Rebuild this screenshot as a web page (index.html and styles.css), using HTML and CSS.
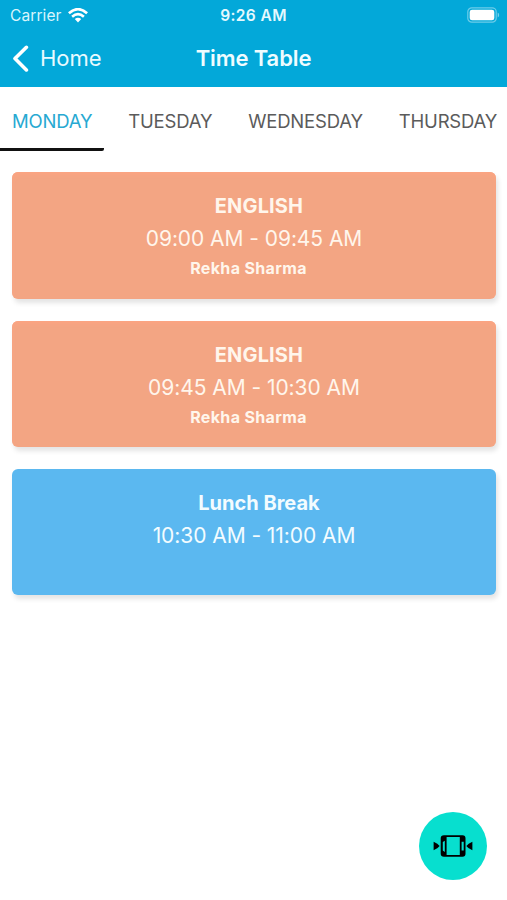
FILE: index.html
```html
<!DOCTYPE html>
<html lang="en">
<head>
<meta charset="utf-8">
<title>Time Table</title>
<link rel="stylesheet" href="styles.css">
</head>
<body>
<header class="header">
  <div class="status">
    <div class="carrier"><span>Carrier</span>
      <svg class="wifi" width="20" height="15" viewBox="0 0 20 15" fill="none" stroke="#fff" stroke-width="2.7"><path d="M.9 5.2Q10-2.8 19.1 5.2"/><path d="M4.1 8.7Q10 3.7 15.9 8.7"/><path d="M6.8 11.1Q10 8.4 13.2 11.1L10 14.5Z" fill="#fff" stroke="none"/></svg>
    </div>
    <span class="clock">9:26 AM</span>
    <svg class="battery" width="33" height="17" viewBox="0 0 33 17"><rect x=".8" y=".8" width="28.4" height="14.4" rx="4" fill="none" stroke="#fff" stroke-opacity=".42" stroke-width="1.2"/><rect x="2.7" y="2.7" width="24.6" height="10.6" rx="2.4" fill="#fff"/><path d="M30.7 5.6q1.5.8 1.5 2.4t-1.5 2.4z" fill="#fff" fill-opacity=".45"/></svg>
  </div>
  <nav class="nav">
    <a class="back"><svg width="17" height="27" viewBox="0 0 17 27" fill="none" stroke="#fff" stroke-width="3.6" stroke-linecap="round" stroke-linejoin="round"><path d="M14.4 2.3L3 13.5L14.4 24.9"/></svg><span>Home</span></a>
    <h1 class="title">Time Table</h1>
    <span></span>
  </nav>
</header>
<div class="tabs">
  <span class="tab active">MONDAY</span>
  <span class="tab">TUESDAY</span>
  <span class="tab">WEDNESDAY</span>
  <span class="tab">THURSDAY</span>
</div>
<main class="list">
  <section class="card">
    <h2 class="subject">ENGLISH</h2>
    <p class="time">09:00 AM - 09:45 AM</p>
    <p class="teacher">Rekha Sharma</p>
  </section>
  <section class="card">
    <h2 class="subject">ENGLISH</h2>
    <p class="time">09:45 AM - 10:30 AM</p>
    <p class="teacher">Rekha Sharma</p>
  </section>
  <section class="card lunch">
    <h2 class="subject">Lunch Break</h2>
    <p class="time">10:30 AM - 11:00 AM</p>
  </section>
</main>
<button class="fab" aria-label="Rotate">
  <svg width="40" height="22" viewBox="0 0 40 22"><path d="M.6 6.8Q5 8.5 6.6 11Q5 13.5 .6 15.2Z"/><path d="M39.4 6.8Q35 8.5 33.4 11Q35 13.5 39.4 15.2Z"/><path fill-rule="evenodd" d="M11 .3H29.5Q32.5 .3 32.5 3.3V18.7Q32.5 21.7 29.5 21.7H11Q7.7 21.7 7.7 18.7V3.3Q7.7 .3 11 .3ZM13.6 2.1V19.9H26.8V2.1ZM9.8 7V15.5L11.8 17V5.7ZM28.6 6.7V15.4H30.7V6.7Z"/></svg>
</button>
</body>
</html>
```

FILE: styles.css
```css
* { box-sizing: border-box; }
body {
  margin: 0;
  height: 900px;
  overflow: hidden;
  background: #fff;
  font-family: Inter, "Liberation Sans", sans-serif;
}
h1, h2, p { margin: 0; }
svg { display: block; flex: none; }
.header {
  height: 87px;
  background: #03a8d9;
  color: #fff;
}
.status, .nav {
  display: grid;
  grid-template-columns: 1fr auto 1fr;
  align-items: center;
}
.status { height: 30px; padding: 0 7px 0 10px; }
.carrier {
  display: flex;
  align-items: center;
  gap: 6px;
  font-size: 15.5px;
  letter-spacing: 0.1px;
  color: #d9f5fc;
}
.clock {
  margin: 0 3px 0 0;
  font-size: 15.5px;
  font-weight: 600;
  letter-spacing: 0.4px;
  color: #e5f9fe;
}
.battery { justify-self: end; }
.nav { height: 56px; padding: 0 12px; }
.back {
  display: flex;
  align-items: center;
  gap: 11px;
  font-size: 22px;
  color: #e9faff;
}
.title {
  font-size: 22px;
  font-weight: 600;
  letter-spacing: -0.1px;
  color: #effcff;
}
.tabs {
  display: flex;
  gap: 12px;
  height: 64px;
  white-space: nowrap;
}
.tab {
  padding: 0 12px;
  line-height: 69px;
  font-size: 18.5px;
  letter-spacing: -0.2px;
  color: #5b5b5b;
}
.active {
  height: 64px;
  border-bottom: 3px solid #111;
  border-radius: 0 0 2px 0;
  color: #27a9d2;
}
.list {
  display: flex;
  flex-direction: column;
  gap: 22px;
  padding: 21.4px 11px 0 12px;
}
.card {
  height: 126.3px;
  padding-top: 20px;
  border-radius: 6px;
  background: #f3a583;
  box-shadow: 2px 4px 5px rgba(0, 0, 0, .11), inset 0 3px 4px #fba482;
  color: #fff6ec;
  text-align: center;
}
.lunch {
  background: #5bb8f0;
  box-shadow: 2px 4px 5px rgba(0, 0, 0, .11);
  color: #f3fcff;
}
.subject {
  padding-left: 10px;
  font-size: 20px;
  line-height: 29px;
  font-weight: 700;
  letter-spacing: 0.15px;
}
.lunch .subject { letter-spacing: 0; }
.time { font-size: 21px; line-height: 35px; letter-spacing: -0.06px; }
.teacher {
  padding-right: 11px;
  font-size: 16px;
  line-height: 24px;
  font-weight: 700;
  letter-spacing: 0.35px;
}
.fab {
  position: absolute;
  left: 419px;
  top: 812px;
  width: 68px;
  height: 68px;
  display: grid;
  place-items: center;
  padding: 0;
  border: 0;
  border-radius: 50%;
  background: #07dfcf;
}
```
